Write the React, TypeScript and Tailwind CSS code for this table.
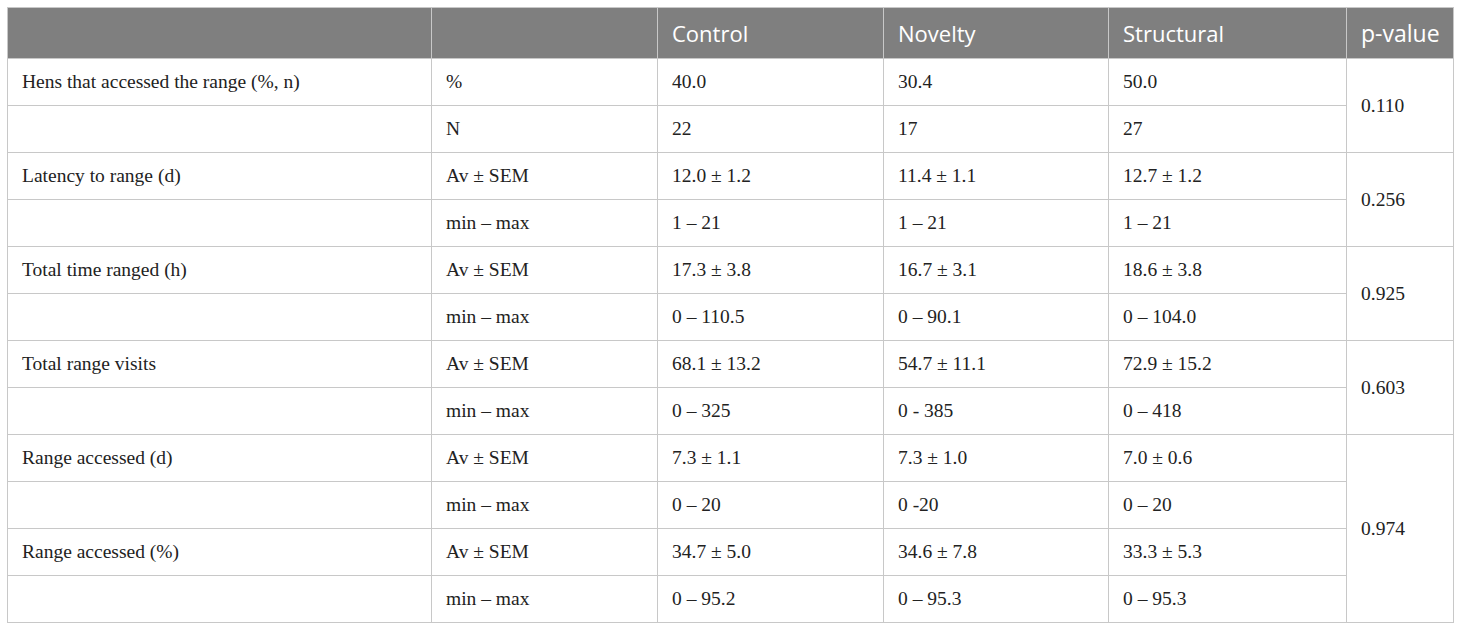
import React from "react";

type Row = { label: string; stat: string; c: string; n: string; s: string; p?: string; span?: number };

const rows: Row[] = [
  { label: "Hens that accessed the range (%, n)", stat: "%", c: "40.0", n: "30.4", s: "50.0", p: "0.110", span: 2 },
  { label: "", stat: "N", c: "22", n: "17", s: "27" },
  { label: "Latency to range (d)", stat: "Av ± SEM", c: "12.0 ± 1.2", n: "11.4 ± 1.1", s: "12.7 ± 1.2", p: "0.256", span: 2 },
  { label: "", stat: "min – max", c: "1 – 21", n: "1 – 21", s: "1 – 21" },
  { label: "Total time ranged (h)", stat: "Av ± SEM", c: "17.3 ± 3.8", n: "16.7 ± 3.1", s: "18.6 ± 3.8", p: "0.925", span: 2 },
  { label: "", stat: "min – max", c: "0 – 110.5", n: "0 – 90.1", s: "0 – 104.0" },
  { label: "Total range visits", stat: "Av ± SEM", c: "68.1 ± 13.2", n: "54.7 ± 11.1", s: "72.9 ± 15.2", p: "0.603", span: 2 },
  { label: "", stat: "min – max", c: "0 – 325", n: "0 - 385", s: "0 – 418" },
  { label: "Range accessed (d)", stat: "Av ± SEM", c: "7.3 ± 1.1", n: "7.3 ± 1.0", s: "7.0 ± 0.6", p: "0.974", span: 4 },
  { label: "", stat: "min – max", c: "0 – 20", n: "0 -20", s: "0 – 20" },
  { label: "Range accessed (%)", stat: "Av ± SEM", c: "34.7 ± 5.0", n: "34.6 ± 7.8", s: "33.3 ± 5.3" },
  { label: "", stat: "min – max", c: "0 – 95.2", n: "0 – 95.3", s: "0 – 95.3" },
];

const td = "border border-[#c8c8c8] pl-[14px] pr-2 align-middle whitespace-nowrap";

export default function App() {
  return (
    <div className="bg-white w-[1460px] h-[630px] pt-[7px] pl-[7px]">
      <table
        className="border-collapse table-fixed w-[1446px] text-[#222]"
        style={{ fontFamily: '"Liberation Serif", "DejaVu Serif", serif' }}
      >
        <colgroup>
          <col className="w-[424px]" />
          <col className="w-[226px]" />
          <col className="w-[226px]" />
          <col className="w-[225px]" />
          <col className="w-[238px]" />
          <col className="w-[107px]" />
        </colgroup>
        <thead>
          <tr className="h-[51px] bg-[#7f7f7f] text-white text-[22px]" style={{ fontFamily: '"Open Sans", "Noto Sans", sans-serif' }}>
            <th className={td + " font-normal text-left"}></th>
            <th className={td + " font-normal text-left"}></th>
            <th className={td + " font-normal text-left"}>Control</th>
            <th className={td + " font-normal text-left"}>Novelty</th>
            <th className={td + " font-normal text-left"}>Structural</th>
            <th className={td + " font-normal text-left pl-[10px] text-[23px]"}>p-value</th>
          </tr>
        </thead>
        <tbody className="text-[19.5px] leading-[24px]">
          {rows.map((r, i) => (
            <tr key={i} className="h-[47px]">
              <td className={td}>{r.label}</td>
              <td className={td}>{r.stat}</td>
              <td className={td}>{r.c}</td>
              <td className={td}>{r.n}</td>
              <td className={td}>{r.s}</td>
              {r.p && (
                <td className={td + " pl-[11px]"} rowSpan={r.span}>
                  {r.p}
                </td>
              )}
            </tr>
          ))}
        </tbody>
      </table>
    </div>
  );
}
